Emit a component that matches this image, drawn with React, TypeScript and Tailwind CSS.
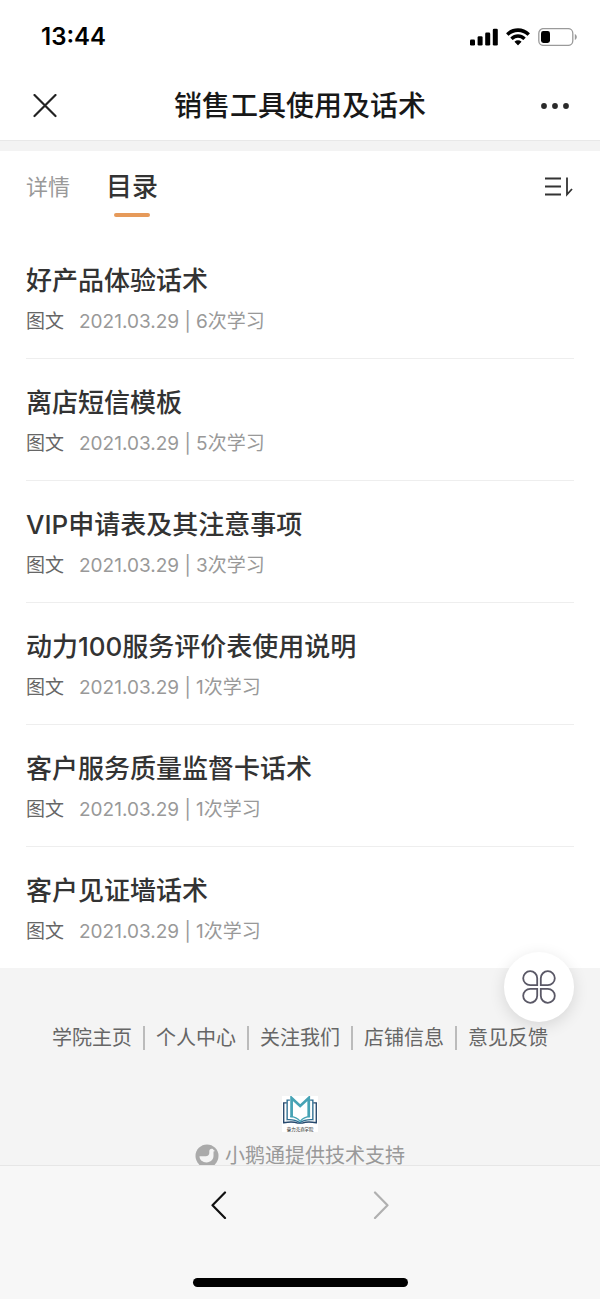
import React, { useState } from 'react';

interface Lesson {
  id: number;
  title: string;
  kind: string;
  date: string;
  views: number;
}

const LESSONS: Lesson[] = [
  { id: 1, title: '好产品体验话术', kind: '图文', date: '2021.03.29', views: 6 },
  { id: 2, title: '离店短信模板', kind: '图文', date: '2021.03.29', views: 5 },
  { id: 3, title: 'VIP申请表及其注意事项', kind: '图文', date: '2021.03.29', views: 3 },
  { id: 4, title: '动力100服务评价表使用说明', kind: '图文', date: '2021.03.29', views: 1 },
  { id: 5, title: '客户服务质量监督卡话术', kind: '图文', date: '2021.03.29', views: 1 },
  { id: 6, title: '客户见证墙话术', kind: '图文', date: '2021.03.29', views: 1 },
];

const FOOTER_LINKS = ['学院主页', '个人中心', '关注我们', '店铺信息', '意见反馈'];

const StatusBar: React.FC = () => (
  <div className="flex h-[74px] items-center justify-between pr-[22px] pl-[41px]">
    <span className="text-2xl leading-7 font-semibold text-black">13:44</span>
    <div className="flex items-center gap-2">
      <svg className="h-[18px] w-7" viewBox="0 0 28 18" aria-hidden="true">
        <rect x="0" y="11.5" width="5" height="6" rx="1.3" />
        <rect x="7.6" y="8.3" width="5" height="9.2" rx="1.3" />
        <rect x="15.2" y="4.6" width="5" height="12.9" rx="1.3" />
        <rect x="22.8" y="0.8" width="5" height="16.7" rx="1.3" />
      </svg>
      <svg className="h-[18px] w-6" viewBox="0 0 24 18" aria-hidden="true">
        <path d="M12 .3c4.400 0 8.500 1.700 11.600 4.700a.5.5 0 0 1 0 .7l-1.800 1.800a.5.5 0 0 1-.7 0A13 13 0 0 0 12 3.900 13 13 0 0 0 2.900 7.500a.5.5 0 0 1-.7 0L.4 5.700a.5.5 0 0 1 0-.7A16.700 16.700 0 0 1 12 .3z" />
        <path d="M12 6.300c2.800 0 5.400 1.100 7.400 3a.5.5 0 0 1 0 .7l-1.800 1.800a.5.5 0 0 1-.7 0 7.100 7.100 0 0 0-9.800 0 .5.5 0 0 1-.7 0L4.600 10a.5.5 0 0 1 0-.7c2-1.900 4.600-3 7.400-3z" />
        <path d="M12 12.200c1.300 0 2.400.4 3.300 1.200a.5.5 0 0 1 0 .7l-2.900 3a.5.5 0 0 1-.8 0l-2.900-3a.5.5 0 0 1 0-.7c.9-.8 2-1.200 3.300-1.200z" />
      </svg>
      <svg className="h-[18px] w-10" viewBox="0 0 40 18" aria-hidden="true">
        <rect x="0.8" y="0.6" width="34" height="16.8" rx="4.6" fill="none" stroke="#9a9a9a" strokeWidth="1.3" />
        <rect x="3" y="3" width="9" height="12" rx="2.4" />
        <path d="M36.800 6c1.200.5 2 1.600 2 3s-.8 2.500-2 3z" fill="#9a9a9a" />
      </svg>
    </div>
  </div>
);

const AcademyLogo: React.FC = () => (
  <svg className="h-9 w-9" viewBox="0 0 105 105" role="img" aria-label="学院">
    <rect width="105" height="105" fill="#fff" />
    <g fill="none" strokeWidth="4">
      <path d="M14 20H5v58c17-3 33-2 41 1h13c8-3 24-4 41-1V20h-9" stroke="#27496d" />
      <path d="M23 12h-8v57c14-1 27 2 37 9 10-7 23-10 38-9V12h-8" stroke="#2f6f92" />
    </g>
    <path d="M28 62V6l25 23L78 6v56" fill="#fff" stroke="#46a3b5" strokeWidth="8" />
    <path d="M24 60c12 0 22 5 29 14 7-9 17-14 29-14" fill="none" stroke="#46a3b5" strokeWidth="4" />
    <text x="53" y="102" textAnchor="middle" fontSize="13" fontWeight="500" fill="#4a4a4a">
      豪力克商学院
    </text>
  </svg>
);

const GooseIcon: React.FC = () => (
  <svg className="h-6 w-6" viewBox="0 0 24 24" aria-hidden="true">
    <circle cx="12" cy="12" r="11.5" fill="#aaa" />
    <path
      d="M4.500 12.300h6.200c2.300 0 3.600-1.200 3.600-3.200V7.300c0-1.500 1-2.500 2.300-2.500 1 0 1.700.5 2 1.300l1.400.8-1.500.5v4.700c0 3.700-2.900 6.300-6.900 6.300-4.100 0-7.100-2.500-7.100-6.100z"
      fill="#f4f4f4"
    />
  </svg>
);

const App: React.FC = () => {
  const [tab, setTab] = useState<'detail' | 'catalog'>('catalog');
  const [reversed, setReversed] = useState(false);

  const lessons = reversed ? [...LESSONS].reverse() : LESSONS;

  return (
    <div className="flex min-h-screen flex-col bg-white font-['Inter','Noto_Sans_CJK_SC',sans-serif]">
      <header className="border-b border-[#e8e8e8]">
        <StatusBar />
        <div className="flex h-[66px] items-center justify-between px-[30px] pb-[2px]">
          <button type="button" aria-label="关闭" className="flex w-[30px] justify-center">
            <svg className="h-6 w-6" viewBox="0 0 24 24" fill="none" stroke="#222" strokeWidth="2.2" strokeLinecap="round">
              <path d="M1.500 1l21 21M22.500 1l-21 21" />
            </svg>
          </button>
          <h1 className="text-[28px] leading-9 font-medium text-[#181818]">销售工具使用及话术</h1>
          <button type="button" aria-label="更多" className="flex w-[30px] justify-center">
            <svg className="h-2 w-[30px]" viewBox="0 0 30 8" fill="#2a2a2a">
              <circle cx="4" cy="4" r="2.9" />
              <circle cx="15" cy="4" r="2.9" />
              <circle cx="26" cy="4" r="2.9" />
            </svg>
          </button>
        </div>
      </header>
      <div className="h-[10px] bg-[#f3f3f3]" />

      <main>
        <div className="flex h-[86px] items-start justify-between px-[26px] pt-4">
          <div className="flex items-start gap-9">
            <button
              type="button"
              onClick={() => setTab('detail')}
              className={`text-[22px] leading-10 ${tab === 'detail' ? 'font-medium text-[#333]' : 'text-[#999]'}`}
            >
              详情
            </button>
            <button
              type="button"
              onClick={() => setTab('catalog')}
              className={`flex flex-col items-center text-[26px] leading-10 ${tab === 'catalog' ? 'font-medium text-[#333]' : 'text-[#999]'}`}
            >
              目录
              {tab === 'catalog' && <span className="mt-[6px] h-1 w-9 rounded-full bg-[#e69a5a]" />}
            </button>
          </div>
          <button type="button" aria-label="排序" onClick={() => setReversed(!reversed)} className="flex h-10 items-center">
            <svg className="h-5 w-[30px]" viewBox="0 0 30 20" fill="none" stroke="#333" strokeWidth="1.8">
              <path d="M1 1.500h16M1 9.500h16M1 17.500h16" />
              <path d="M23 .5v17l5-5.500" />
            </svg>
          </button>
        </div>

        <ul className="px-[26px]">
          {lessons.map(lesson => (
            <li key={lesson.id} className="border-b border-[#eee] pt-[25px] pb-[22px] last:border-b-0">
              <a href={`#lesson-${lesson.id}`} className="block">
                <h2 className="text-[26px] leading-[38px] font-medium text-[#333]">{lesson.title}</h2>
                <p className="mt-2 flex gap-[15px] text-[19px] leading-7 text-[#999]">
                  <span className="text-[#666]">{lesson.kind}</span>
                  <span>
                    {lesson.date} | {lesson.views}次学习
                  </span>
                </p>
              </a>
            </li>
          ))}
        </ul>
      </main>

      <footer className="flex flex-1 flex-col items-center bg-[#f4f4f4] pt-[58px]">
        <nav className="flex justify-center divide-x-2 divide-[#bbb]">
          {FOOTER_LINKS.map(link => (
            <a key={link} href="#" className="px-[11px] text-xl leading-6 text-[#666]">
              {link}
            </a>
          ))}
        </nav>
        <div className="mt-[46px]">
          <AcademyLogo />
        </div>
        <div className="mt-[10px] flex items-center gap-[6px] text-xl leading-7 text-[#999]">
          <GooseIcon />
          小鹅通提供技术支持
        </div>
      </footer>

      <button
        type="button"
        aria-label="菜单"
        className="fixed right-[26px] bottom-[277px] flex h-[70px] w-[70px] items-center justify-center rounded-full bg-white shadow-[0_4px_16px_rgba(0,0,0,0.12)]"
      >
        <svg className="h-[34px] w-[34px]" viewBox="0 0 34 34" fill="none" stroke="#5a5866" strokeWidth="1.8">
          <path d="M15.200 15.200H8.300a7 7 0 1 1 6.900-7z" />
          <path d="M18.800 15.200h6.900a7 7 0 1 0-6.900-7z" />
          <path d="M15.200 18.800H8.300a7 7 0 1 0 6.900 7z" />
          <path d="M18.800 18.800h6.900a7 7 0 1 1-6.900 7z" />
        </svg>
      </button>

      {/* Browser toolbar */}
      <div className="fixed inset-x-0 bottom-0 flex h-[134px] flex-col items-center justify-between border-t border-[#e6e6e6] bg-[#f7f7f7] pt-[25px] pb-3">
        <div className="flex gap-[132px]">
          <button type="button" aria-label="后退" className="flex w-[30px] justify-center">
            <svg className="h-7 w-4" viewBox="0 0 16 28" fill="none" stroke="#111" strokeWidth="2.2" strokeLinecap="round" strokeLinejoin="round">
              <path d="M14 1.500L1.500 14.300 14 27" />
            </svg>
          </button>
          <button type="button" aria-label="前进" className="flex w-[30px] justify-center">
            <svg className="h-7 w-4" viewBox="0 0 16 28" fill="none" stroke="#b0b0b0" strokeWidth="2.2" strokeLinecap="round" strokeLinejoin="round">
              <path d="M2 1.500l12.500 12.800L2 27" />
            </svg>
          </button>
        </div>
        <div className="h-[9px] w-[215px] rounded-full bg-black" />
      </div>
    </div>
  );
};

export default App;
